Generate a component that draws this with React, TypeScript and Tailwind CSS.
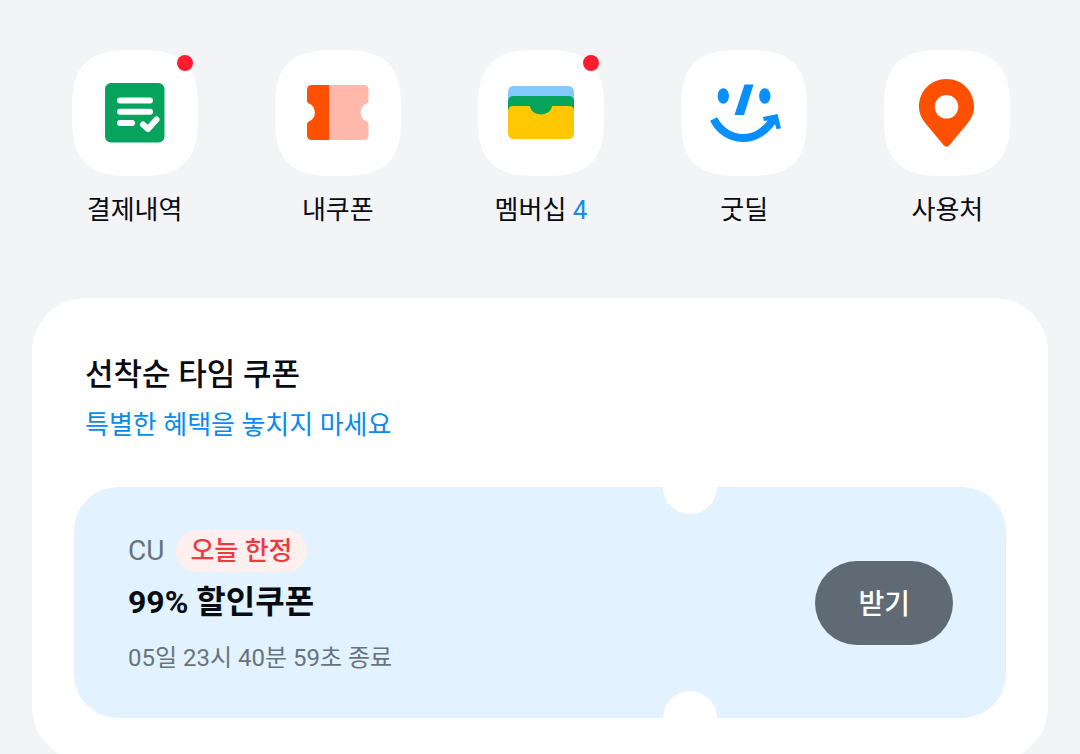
import type { ReactNode } from "react";

type Shortcut = {
  label: string;
  count?: number;
  hasBadge?: boolean;
  icon: ReactNode;
};

const ReceiptIcon = (
  <g>
    <rect x="33" y="33" width="59.500" height="59.500" rx="6" fill="#05a35c" />
    <g fill="none" stroke="#fff" strokeWidth="6" strokeLinecap="round" strokeLinejoin="round">
      <path d="M48 50.500H78M48 61.700H78M48 73H60" />
      <path d="M71 74.500L76 79L84.500 69.500" />
    </g>
  </g>
);

const CouponIcon = (
  <g>
    <path d="M54.500 35H37Q32 35 32 40V51Q32 52.500 33.500 53.200A10 10 0 0 1 33.500 71.800Q32 72.500 32 74V85Q32 90 37 90H54.500Z" fill="#ff4f00" />
    <path d="M54.500 35H88.500Q93.500 35 93.500 40V51Q93.500 52.500 92 53.200A10 10 0 0 0 92 71.800Q93.500 72.500 93.500 74V85Q93.500 90 88.500 90H54.500Z" fill="#ffb8aa" />
  </g>
);

const WalletIcon = (
  <g>
    <path d="M30 60V42Q30 36 36 36H90Q96 36 96 42V60Z" fill="#83c9ff" />
    <path d="M30 75V51Q30 46 36 46H90Q96 46 96 51V75Z" fill="#05a35c" />
    <path d="M30 61Q30 56 35 56H52A11 8.500 0 0 0 74 56H91Q96 56 96 61V83Q96 89 90 89H36Q30 89 30 83Z" fill="#ffc800" />
  </g>
);

const SmileIcon = (
  <g fill="#078eff">
    <ellipse cx="42.300" cy="46" rx="5.700" ry="7.800" />
    <ellipse cx="83.800" cy="46" rx="5.700" ry="7.800" />
    <path d="M63.500 34.500H72.500L63 65H53.500Z" />
    <path d="M32.700 69C45 94 78 95 93 68" fill="none" stroke="#078eff" strokeWidth="8" />
    <path d="M82 67L96.500 64L100 78.300L95.700 79.300L93.500 73L87 70.500L82.800 71Z" />
  </g>
);

const PinIcon = (
  <path
    fill="#ff4f00"
    fillRule="evenodd"
    d="M62.500 29C46.500 29 35 41.500 35 56.500C35 64 38 69 42 74L59.500 95Q62.500 98.500 65.500 95L83 74C87 69 90 64 90 56.500C90 41.500 78.500 29 62.500 29ZM62.500 45A11.800 11.800 0 1 1 62.500 68.600A11.800 11.800 0 1 1 62.500 45Z"
  />
);

const shortcuts: Shortcut[] = [
  { label: "결제내역", hasBadge: true, icon: ReceiptIcon },
  { label: "내쿠폰", icon: CouponIcon },
  { label: "멤버십", count: 4, hasBadge: true, icon: WalletIcon },
  { label: "굿딜", icon: SmileIcon },
  { label: "사용처", icon: PinIcon },
];

function ShortcutLink({ label, count, hasBadge, icon }: Shortcut) {
  return (
    <a href="#" className="flex flex-col items-center gap-4">
      <span className="relative">
        <svg viewBox="0 0 126 126" className="block size-[126px]" aria-hidden="true">
          <path
            d="M56 0H70C110 0 126 16 126 56V70C126 110 110 126 70 126H56C16 126 0 110 0 70V56C0 16 16 0 56 0Z"
            fill="#fff"
          />
          {icon}
        </svg>
        {hasBadge && <span className="absolute top-[5px] right-[5px] size-4 rounded-full bg-[#ff1c2e]" />}
      </span>
      <span className="text-[26px] leading-9">
        {label}
        {count !== undefined && <span className="text-[#198ae6]"> {count}</span>}
      </span>
    </a>
  );
}

function CouponTicket() {
  return (
    <article className="relative flex items-center justify-between overflow-hidden rounded-[44px] bg-[#e2f3ff] pt-[43px] pr-[53px] pb-[42px] pl-[54px]">
      <span className="absolute -top-[27px] right-[289px] size-[54px] rounded-full bg-white" />
      <span className="absolute right-[289px] -bottom-[27px] size-[54px] rounded-full bg-white" />
      <div>
        <div className="flex items-center gap-3">
          <span className="text-[28px] leading-[42px] text-[#68737d]">CU</span>
          <span className="rounded-full bg-[#ffefef] px-[14px] text-[26px] leading-[42px] font-medium text-[#ef3b40]">
            오늘 한정
          </span>
        </div>
        <h3 className="mt-2 text-[32px] leading-[44px] font-bold">99% 할인쿠폰</h3>
        <p className="mt-4 text-2xl leading-9 text-[#68737d]">05일 23시 40분 59초 종료</p>
      </div>
      <button
        type="button"
        className="rounded-full bg-[#606a74] px-[43px] pt-6 pb-5 text-[28px] leading-10 font-medium text-white"
      >
        받기
      </button>
    </article>
  );
}

export default function App() {
  return (
    <div className="min-h-screen bg-[#f2f4f6] px-8 pt-[50px] font-[Roboto,'Noto_Sans_CJK_KR',sans-serif] text-[#080b12]">
      <nav className="-mr-px ml-px grid grid-cols-5">
        {shortcuts.map((item) => (
          <ShortcutLink key={item.label} {...item} />
        ))}
      </nav>
      <section className="mt-[70px] rounded-[54px] bg-white px-[42px] pt-[55px] pb-[43px]">
        <div className="px-[11px]">
          <h2 className="text-[31px] leading-[44px] font-medium">선착순 타임 쿠폰</h2>
          <p className="mt-2 text-[26px] leading-10 text-[#078bee]">특별한 혜택을 놓치지 마세요</p>
        </div>
        <div className="mt-[42px]">
          <CouponTicket />
        </div>
      </section>
    </div>
  );
}
